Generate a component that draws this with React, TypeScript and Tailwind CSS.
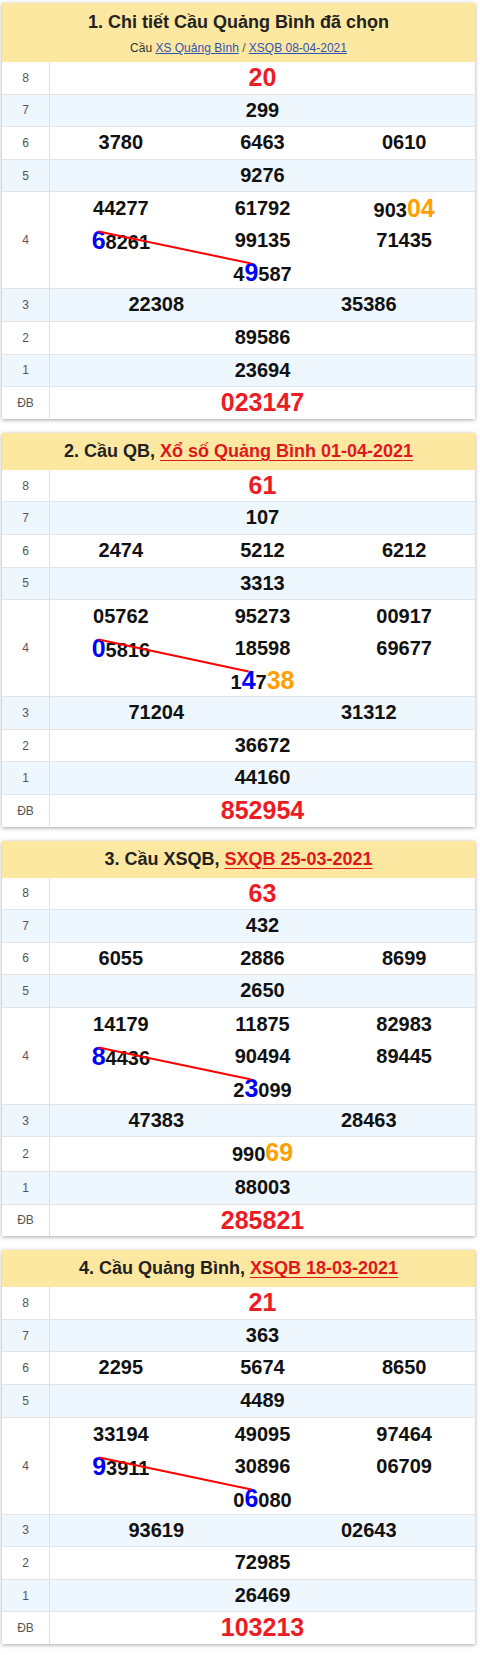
import React, { useLayoutEffect, useRef, useState } from "react";

type TableData = {
  id: number;
  header: React.ReactNode;
  p8: string;
  p7: string;
  p6: string[];
  p5: string;
  p4: string[];
  p3: string[];
  p2: string;
  p1: string;
  db: string;
};

function renderNum(
  s: string,
  blueRef?: (el: HTMLSpanElement | null) => void
): React.ReactNode[] {
  const out: React.ReactNode[] = [];
  let i = 0;
  let k = 0;
  while (i < s.length) {
    const ch = s[i];
    if (ch === "[") {
      const j = s.indexOf("]", i);
      out.push(
        <span key={k++} ref={blueRef} className="text-[25px] text-[#0000ff]">
          {s.slice(i + 1, j)}
        </span>
      );
      i = j + 1;
    } else if (ch === "{") {
      const j = s.indexOf("}", i);
      out.push(
        <span key={k++} className="text-[25px] text-[#ffa000]">
          {s.slice(i + 1, j)}
        </span>
      );
      i = j + 1;
    } else {
      let j = i;
      while (j < s.length && s[j] !== "[" && s[j] !== "{") j++;
      out.push(<span key={k++}>{s.slice(i, j)}</span>);
      i = j;
    }
  }
  return out;
}

function Row({
  label,
  blue,
  children,
}: {
  label: string;
  blue?: boolean;
  children: React.ReactNode;
}) {
  return (
    <div
      className={
        "flex border-b border-[#e4e4e4] last:border-b-0 " +
        (blue ? "bg-[#eef6fe]" : "bg-white")
      }
    >
      <div className="w-[48px] shrink-0 border-r border-[#e0e0e0] flex items-center justify-center text-[12px] text-[#555]">
        {label}
      </div>
      <div className="flex-1 min-w-0">{children}</div>
    </div>
  );
}

const numCls = "text-[20px] font-bold leading-[31.6px] text-[#111] text-center";
const redCls = "text-[25px] font-bold leading-[31.6px] text-[#ec1c24] text-center";

function Prize4({ items }: { items: string[] }) {
  const box = useRef<HTMLDivElement | null>(null);
  const refs = useRef<(HTMLSpanElement | null)[]>([]);
  const [pts, setPts] = useState<number[] | null>(null);
  let blueCount = 0;

  useLayoutEffect(() => {
    const b = box.current;
    const a = refs.current[0];
    const c = refs.current[1];
    if (!b || !a || !c) return;
    const br = b.getBoundingClientRect();
    const ar = a.getBoundingClientRect();
    const cr = c.getBoundingClientRect();
    setPts([
      ar.left + ar.width / 2 - br.left,
      ar.top + ar.height / 2 - 8.5 - br.top,
      cr.left + cr.width / 2 - br.left,
      cr.top + cr.height / 2 - 8.5 - br.top,
    ]);
  }, []);

  return (
    <div ref={box} className="relative grid grid-cols-3">
      {items.map((s, idx) => {
        const hasBlue = s.includes("[");
        let cb: ((el: HTMLSpanElement | null) => void) | undefined;
        if (hasBlue) {
          const bi = blueCount++;
          cb = (el) => {
            refs.current[bi] = el;
          };
        }
        return (
          <div
            key={idx}
            className={
              "h-[32px] leading-[32px] text-[20px] font-bold text-[#111] text-center " +
              (idx === 6 ? "col-start-2" : "")
            }
          >
            {renderNum(s, cb)}
          </div>
        );
      })}
      {pts && (
        <svg className="absolute inset-0 w-full h-full pointer-events-none overflow-visible">
          <line
            x1={pts[0]}
            y1={pts[1]}
            x2={pts[2]}
            y2={pts[3]}
            stroke="#ff0000"
            strokeWidth={2}
          />
        </svg>
      )}
    </div>
  );
}

function Table({ d }: { d: TableData }) {
  return (
    <div className="ml-[2px] w-[473px] bg-white shadow-[0_1px_4px_rgba(0,0,0,0.35)] mb-[14px]">
      {d.header}
      <Row label="8">
        <div className={redCls}>{d.p8}</div>
      </Row>
      <Row label="7" blue>
        <div className={numCls}>{d.p7}</div>
      </Row>
      <Row label="6">
        <div className="grid grid-cols-3">
          {d.p6.map((s, i) => (
            <div key={i} className={numCls}>
              {s}
            </div>
          ))}
        </div>
      </Row>
      <Row label="5" blue>
        <div className={numCls}>{d.p5}</div>
      </Row>
      <Row label="4">
        <Prize4 items={d.p4} />
      </Row>
      <Row label="3" blue>
        <div className="grid grid-cols-2">
          {d.p3.map((s, i) => (
            <div key={i} className={numCls}>
              {s}
            </div>
          ))}
        </div>
      </Row>
      <Row label="2">
        <div className={numCls}>{renderNum(d.p2)}</div>
      </Row>
      <Row label="1" blue>
        <div className={numCls}>{d.p1}</div>
      </Row>
      <Row label="ĐB">
        <div className={redCls}>{d.db}</div>
      </Row>
    </div>
  );
}

function SimpleHeader({ prefix, link }: { prefix: string; link: string }) {
  return (
    <div className="h-[37px] bg-[#fde8a1] flex items-center justify-center text-[18px] font-bold text-[#222]">
      <span>{prefix}&nbsp;</span>
      <a className="text-[#e0161e] underline decoration-1 underline-offset-[3px]">
        {link}
      </a>
    </div>
  );
}

const tables: TableData[] = [
  {
    id: 1,
    header: (
      <div className="h-[59px] bg-[#fde8a1] flex flex-col items-center pt-[7px]">
        <div className="text-[18px] leading-[24px] font-bold text-[#222]">
          1. Chi tiết Cầu Quảng Bình đã chọn
        </div>
        <div className="mt-[6px] text-[12px] leading-[16px] text-[#333]">
          Cầu <a className="text-[#3550b5] underline">XS Quảng Bình</a>
          <span className="text-[#555]"> / </span>
          <a className="text-[#3550b5] underline">XSQB 08-04-2021</a>
        </div>
      </div>
    ),
    p8: "20",
    p7: "299",
    p6: ["3780", "6463", "0610"],
    p5: "9276",
    p4: ["44277", "61792", "903{04}", "[6]8261", "99135", "71435", "4[9]587"],
    p3: ["22308", "35386"],
    p2: "89586",
    p1: "23694",
    db: "023147",
  },
  {
    id: 2,
    header: <SimpleHeader prefix="2. Cầu QB," link="Xổ số Quảng Bình 01-04-2021" />,
    p8: "61",
    p7: "107",
    p6: ["2474", "5212", "6212"],
    p5: "3313",
    p4: ["05762", "95273", "00917", "[0]5816", "18598", "69677", "1[4]7{38}"],
    p3: ["71204", "31312"],
    p2: "36672",
    p1: "44160",
    db: "852954",
  },
  {
    id: 3,
    header: <SimpleHeader prefix="3. Cầu XSQB," link="SXQB 25-03-2021" />,
    p8: "63",
    p7: "432",
    p6: ["6055", "2886", "8699"],
    p5: "2650",
    p4: ["14179", "11875", "82983", "[8]4436", "90494", "89445", "2[3]099"],
    p3: ["47383", "28463"],
    p2: "990{69}",
    p1: "88003",
    db: "285821",
  },
  {
    id: 4,
    header: <SimpleHeader prefix="4. Cầu Quảng Bình," link="XSQB 18-03-2021" />,
    p8: "21",
    p7: "363",
    p6: ["2295", "5674", "8650"],
    p5: "4489",
    p4: ["33194", "49095", "97464", "[9]3911", "30896", "06709", "0[6]080"],
    p3: ["93619", "02643"],
    p2: "72985",
    p1: "26469",
    db: "103213",
  },
];

export default function App() {
  return (
    <div className="w-[480px] bg-white pt-[3px] pb-[1px] font-['Liberation_Sans',Arial,sans-serif]">
      {tables.map((t) => (
        <Table key={t.id} d={t} />
      ))}
    </div>
  );
}
